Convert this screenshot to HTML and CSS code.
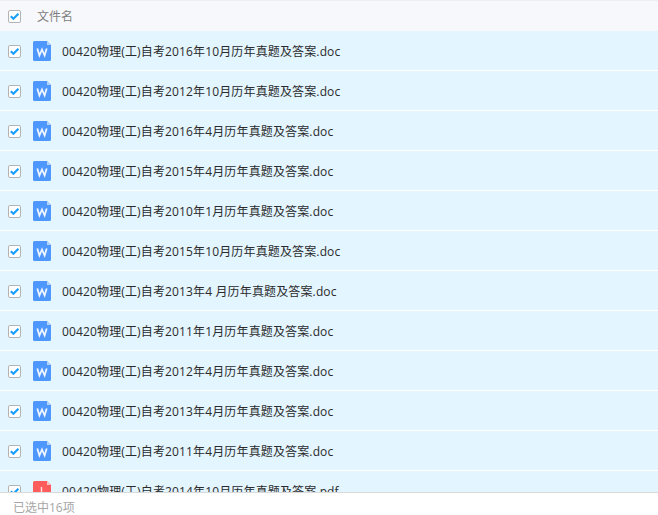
FILE: index.html
```html
<!DOCTYPE html>
<html lang="zh">
<head>
<meta charset="utf-8">
<title>文件列表</title>
<link rel="stylesheet" href="styles.css">
</head>
<body>
<svg class="defs" width="0" height="0" aria-hidden="true">
  <defs>
    <symbol id="check" viewBox="0 0 13 13">
      <rect x="0.5" y="0.5" width="12" height="12" rx="1.5" fill="#fff" stroke="#b3b3b3"/>
      <path d="M2.800 6.300 5.400 8.800 10.400 3.800" fill="none" stroke="#1a9fff" stroke-width="2.200"/>
    </symbol>
    <symbol id="doc" viewBox="0 0 18 20">
      <path d="M1.500 0H14L18 4V18.500A1.500 1.500 0 0 1 16.500 20H1.500A1.500 1.500 0 0 1 0 18.500V1.500A1.500 1.500 0 0 1 1.500 0Z" fill="#4d97ff"/>
      <path d="M14 0 18 4H14Z" fill="#b9d5ff"/>
      <path d="M4.300 7.500 6.400 14.500 9 8.500 11.600 14.500 13.700 7.500" fill="none" stroke="#eef5ff" stroke-width="1.800"/>
    </symbol>
    <symbol id="pdf" viewBox="0 0 18 20">
      <path d="M1.500 0H14L18 4V18.500A1.500 1.500 0 0 1 16.500 20H1.500A1.500 1.500 0 0 1 0 18.500V1.500A1.500 1.500 0 0 1 1.500 0Z" fill="#ff5c5c"/>
      <path d="M14 0 18 4H14Z" fill="#ffc2c2"/>
      <path d="M8.500 6V12" fill="none" stroke="#ffe3e3" stroke-width="1.400"/>
    </symbol>
  </defs>
</svg>
<main class="panel">
  <header class="head">
    <svg class="box"><use href="#check"/></svg>
    <span class="head-label">文件名</span>
  </header>
  <ul class="list">
    <li class="row"><svg class="box"><use href="#check"/></svg><svg class="file"><use href="#doc"/></svg><span class="name">00420物理(工)自考2016年10月历年真题及答案.doc</span></li>
    <li class="row"><svg class="box"><use href="#check"/></svg><svg class="file"><use href="#doc"/></svg><span class="name">00420物理(工)自考2012年10月历年真题及答案.doc</span></li>
    <li class="row"><svg class="box"><use href="#check"/></svg><svg class="file"><use href="#doc"/></svg><span class="name">00420物理(工)自考2016年4月历年真题及答案.doc</span></li>
    <li class="row"><svg class="box"><use href="#check"/></svg><svg class="file"><use href="#doc"/></svg><span class="name">00420物理(工)自考2015年4月历年真题及答案.doc</span></li>
    <li class="row"><svg class="box"><use href="#check"/></svg><svg class="file"><use href="#doc"/></svg><span class="name">00420物理(工)自考2010年1月历年真题及答案.doc</span></li>
    <li class="row"><svg class="box"><use href="#check"/></svg><svg class="file"><use href="#doc"/></svg><span class="name">00420物理(工)自考2015年10月历年真题及答案.doc</span></li>
    <li class="row"><svg class="box"><use href="#check"/></svg><svg class="file"><use href="#doc"/></svg><span class="name">00420物理(工)自考2013年4 月历年真题及答案.doc</span></li>
    <li class="row"><svg class="box"><use href="#check"/></svg><svg class="file"><use href="#doc"/></svg><span class="name">00420物理(工)自考2011年1月历年真题及答案.doc</span></li>
    <li class="row"><svg class="box"><use href="#check"/></svg><svg class="file"><use href="#doc"/></svg><span class="name">00420物理(工)自考2012年4月历年真题及答案.doc</span></li>
    <li class="row"><svg class="box"><use href="#check"/></svg><svg class="file"><use href="#doc"/></svg><span class="name">00420物理(工)自考2013年4月历年真题及答案.doc</span></li>
    <li class="row"><svg class="box"><use href="#check"/></svg><svg class="file"><use href="#doc"/></svg><span class="name">00420物理(工)自考2011年4月历年真题及答案.doc</span></li>
    <li class="row"><svg class="box"><use href="#check"/></svg><svg class="file"><use href="#pdf"/></svg><span class="name">00420物理(工)自考2014年10月历年真题及答案.pdf</span></li>
  </ul>
  <footer class="foot">已选中16项</footer>
</main>
</body>
</html>
```
FILE: styles.css
```css
* { box-sizing: border-box; }
html, body { margin: 0; height: 100%; overflow: hidden; background: #fff; }
body { font-family: "Open Sans", "Noto Sans CJK SC", sans-serif; font-size: 12px; color: #2b2b2b; }
.defs { position: absolute; }
.panel { display: flex; flex-direction: column; height: 515px; }
.head { flex: none; height: 31px; display: flex; align-items: center; padding-left: 8px; background: #f7f8fc; border-top: 1px solid #eeeeee; color: #808080; }
.head-label { margin-left: 16px; }
.list { flex: 1; min-height: 0; margin: 0; padding: 0; list-style: none; overflow: hidden; }
.row { height: 39px; margin-bottom: 1px; display: flex; align-items: center; padding-left: 8px; background: #e3f5ff; }
.box { width: 13px; height: 13px; flex: none; }
.row .box { margin-top: 1px; }
.file { width: 18px; height: 20px; flex: none; margin-left: 12px; }
.name { margin-left: 11px; white-space: nowrap; letter-spacing: 0.14px; }
.foot { flex: none; height: 23px; padding: 7px 0 0 13px; line-height: 15px; color: #a6a6a6; background: #fff; border-top: 1px solid #d9d9d9; }
```
